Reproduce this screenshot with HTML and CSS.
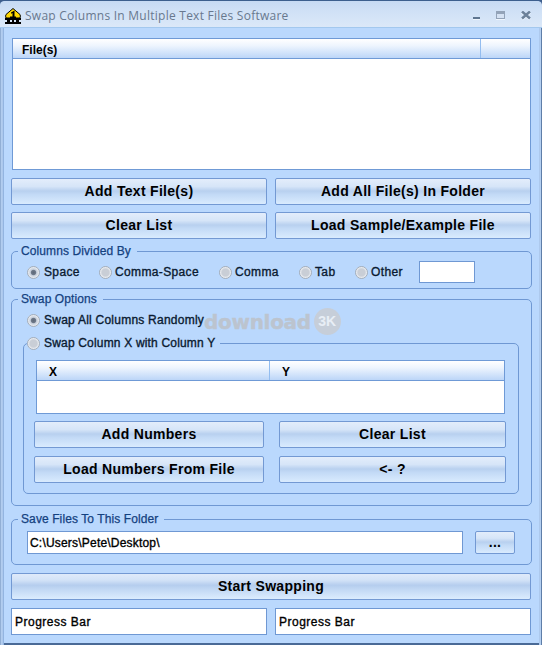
FILE: index.html
```html
<!DOCTYPE html>
<html lang="en">
<head>
<meta charset="utf-8">
<title>Swap Columns In Multiple Text Files Software</title>
<link rel="stylesheet" href="styles.css">
</head>
<body>
<div class="window">
  <header class="titlebar">
    <svg class="app-icon" width="16" height="16" viewBox="0 0 16 16">
      <path d="M8 0.500 L15 6.500 Q15.800 8 15 10 L1 10 Q0.200 8 1 6.500 Z" fill="#ffd800" stroke="#000" stroke-width="1"/>
      <rect x="0" y="10" width="16" height="2" fill="#000"/>
      <rect x="2" y="12" width="3" height="2" fill="#000"/>
      <rect x="7" y="12" width="2" height="2" fill="#000"/>
      <rect x="11" y="12" width="3" height="2" fill="#000"/>
      <rect x="0" y="14" width="16" height="2" fill="#000"/>
      <path d="M6 4.500 L9.500 2.500 L9.500 10 L7.500 10 L7.500 5 L6 5.800 Z" fill="#000"/>
      <rect x="5" y="8.500" width="6" height="1.500" fill="#000"/>
    </svg>
    <span class="title">Swap Columns In Multiple Text Files Software</span>
    <div class="controls">
      <svg width="8" height="10" viewBox="0 0 8 10"><rect x="0" y="6" width="7" height="2" fill="#5f7690"/><rect x="0" y="8" width="7" height="1" fill="#eef5fd"/></svg>
      <svg width="10" height="10" viewBox="0 0 10 10"><rect x="0.500" y="0.500" width="8" height="7" fill="#d5e2f3" stroke="#93a3b8"/><rect x="1" y="1" width="7" height="2" fill="#93a3b8"/><rect x="0" y="8" width="9" height="1" fill="#eef5fd"/></svg>
      <svg width="10" height="10" viewBox="0 0 10 10"><path d="M1 1.500 L9 8.500 M9 1.500 L1 8.500" stroke="#eef5fd" stroke-width="2.500"/><path d="M1 0.500 L9 7.500 M9 0.500 L1 7.500" stroke="#6c8199" stroke-width="2.500"/></svg>
    </div>
  </header>

  <main class="content">
    <div class="list files">
      <div class="list-head"><span class="col col-name">File(s)</span><span class="col col-rest"></span></div>
    </div>

    <div class="btn-grid grid-main">
      <button class="btn">Add Text File(s)</button>
      <button class="btn">Add All File(s) In Folder</button>
      <button class="btn">Clear List</button>
      <button class="btn">Load Sample/Example File</button>
    </div>

    <fieldset class="group group-cols">
      <legend>Columns Divided By</legend>
      <div class="radio-row">
        <label class="radio r-space"><input type="radio" name="sep" checked>Space</label>
        <label class="radio r-cs"><input type="radio" name="sep">Comma-Space</label>
        <label class="radio r-comma"><input type="radio" name="sep">Comma</label>
        <label class="radio r-tab"><input type="radio" name="sep">Tab</label>
        <label class="radio r-other"><input type="radio" name="sep">Other</label>
        <div class="field small"></div>
      </div>
    </fieldset>

    <fieldset class="group group-swap">
      <legend>Swap Options</legend>
      <div class="swap-body">
        <label class="radio r-all"><input type="radio" name="mode" checked>Swap All Columns Randomly</label>
        <fieldset class="group group-inner">
          <legend><label class="radio"><input type="radio" name="mode">Swap Column X with Column Y</label></legend>
          <div class="inner-body">
            <div class="list xy">
              <div class="list-head"><span class="col col-x">X</span><span class="col col-y">Y</span></div>
            </div>
            <div class="btn-grid grid-inner">
              <button class="btn">Add Numbers</button>
              <button class="btn">Clear List</button>
              <button class="btn">Load Numbers From File</button>
              <button class="btn">&lt;- ?</button>
            </div>
          </div>
        </fieldset>
      </div>
    </fieldset>

    <fieldset class="group group-save">
      <legend>Save Files To This Folder</legend>
      <div class="save-row">
        <div class="field path">C:\Users\Pete\Desktop\</div>
        <button class="btn browse">...</button>
      </div>
    </fieldset>

    <button class="btn start">Start Swapping</button>

    <div class="progress-row">
      <div class="field progress">Progress Bar</div>
      <div class="field progress">Progress Bar</div>
    </div>
  </main>

  <div class="watermark" aria-hidden="true">
    <span class="wm-text">download</span>
    <span class="wm-badge">3K</span>
  </div>
</div>
</body>
</html>
```
FILE: styles.css
```css
* { box-sizing: border-box; }
html, body { margin: 0; padding: 0; }
body { width: 542px; height: 645px; overflow: hidden; background: #3f5f8c; font-family: "Liberation Sans", Arial, sans-serif; }

.window {
  position: relative;
  width: 542px;
  height: 645px;
  display: flex;
  flex-direction: column;
  border-top: 1px solid #3c5f8e;
  border-radius: 5px 5px 0 0;
  overflow: hidden;
  background: linear-gradient(90deg, #6f8fba 0, #b5cff0 1px, #a9c6ec 3px, #7ea3d4 4px, #bad8fd 4px, #bad8fd 539px, #a9c6ec 539px, #b8d2f2 541px, #5e7ea8 541px);
}

.titlebar {
  height: 27px;
  flex: none;
  display: flex;
  align-items: center;
  padding: 4px 11px 0 5px;
  background: linear-gradient(#c6daf3 0, #d0e1f6 40%, #dbe8f8 100%);
  border-bottom: 1px solid #a3c8ee;
}
.app-icon { flex: none; margin-right: 4px; }
.title { flex: 1; font: 12px/16px "Open Sans", sans-serif; letter-spacing: 0.25px; color: #68788e; white-space: nowrap; }
.controls { display: flex; align-items: center; gap: 15px; }
.controls svg { display: block; }

.content {
  flex: 1;
  margin: 0 3px 0 4px;
  padding: 10px 8px 8px;
  background: #bad8fd;
  border-bottom: 2px solid #4a6a96;
  display: flex;
  flex-direction: column;
}

.list { background: #fff; border: 1px solid #6f9ad6; }
.files { height: 132px; }
.xy { height: 54px; }
.list-head {
  display: flex;
  height: 20px;
  border-bottom: 1px solid #6f9ad6;
  background: linear-gradient(#fff 0, #eef5fe 35%, #bcd6f8 100%);
  font: bold 12px/22px "Liberation Sans", sans-serif;
  color: #000;
}
.col { display: block; height: 100%; padding-left: 9px; }
.col-name { width: 468px; border-right: 1px solid #93bdf0; }
.col-rest { flex: 1; }
.col-x { width: 233px; padding-left: 12px; border-right: 1px solid #93bdf0; }
.col-y { flex: 1; padding-left: 12px; }

.btn {
  display: block;
  height: 27px;
  margin: 0;
  padding: 0;
  border: 1px solid #7399d3;
  border-radius: 2px;
  background: linear-gradient(#e3edfb 0, #d6e5f8 30%, #b8d0ef 48%, #c3daf6 62%, #d9ebfe 100%);
  font: bold 14px/25px "Liberation Sans", sans-serif;
  color: #000;
  letter-spacing: 0.3px;
}

.btn-grid { display: grid; }
.grid-main { grid-template-columns: 256px 256px; column-gap: 8px; row-gap: 7px; margin: 8px -1px 0; }
.grid-inner { grid-template-columns: 230px 227px; column-gap: 15px; row-gap: 8px; margin: 7px 0 0 -2px; }

.group { margin: 0; padding: 0; min-width: 0; border: 1px solid #6f98d3; border-radius: 5px; }
.group > legend {
  padding: 0 6px 0 3px;
  margin-left: 6px;
  font: 12px/14px "Liberation Sans", sans-serif;
  color: #14417f;
  letter-spacing: 0.1px;
  -webkit-text-stroke: 0.25px #14417f;
}

.group-cols { margin: 5px -1px 0; height: 45px; }
.radio-row { display: flex; align-items: center; height: 24px; margin-top: 2px; padding-left: 15px; }

.radio {
  display: inline-flex;
  align-items: center;
  font: 12px/14px "Liberation Sans", sans-serif;
  letter-spacing: 0.36px;
  -webkit-text-stroke: 0.35px #0a1a30;
  color: #0a1a30;
  white-space: nowrap;
}
.radio input {
  appearance: none;
  -webkit-appearance: none;
  width: 13px;
  height: 13px;
  margin: 0 3px 0 0;
  flex: none;
  border-radius: 50%;
  border: 1px solid #a5aeb9;
  background: radial-gradient(circle at 50% 50%, #c9ced6 0, #c9ced6 45%, #f6f8fb 75%, #f6f8fb 100%);
}
.radio input:checked { background: radial-gradient(circle at 50% 50%, #5e6a7a 0, #6d7888 28%, #c4ccd8 40%, #f6f8fb 78%); }

.r-space { width: 72px; }
.r-space input { margin-right: 4px; }
.r-cs { width: 120px; }
.r-comma { width: 80px; }
.r-tab { width: 56px; }
.r-other { width: 64px; }

.field { background: #fff; border: 1px solid #6f98d3; }
.small { width: 56px; height: 22px; margin-top: -1px; }

.group-swap { margin: 3px -1px 0; height: 214px; }
.swap-body { padding: 0 12px 0 11px; }
.r-all { display: flex; height: 14px; margin: 7px 0 0 4px; letter-spacing: 0.24px; }
.r-all input { margin-right: 4px; }
.group-inner { margin: 8px 0 0 0; height: 159px; }
.group-inner > legend { margin-left: 3px; padding: 0 5px 0 0; height: 16px; }
.group-inner > legend .radio { height: 16px; letter-spacing: 0.18px; }
.group-inner > legend input { margin-right: 4px; }
.inner-body { padding: 9px 13px 0 12px; }

.group-save { margin: 6px -1px 0; height: 53px; }
.save-row { display: flex; gap: 12px; padding: 5px 16px 0 15px; }
.path { flex: 1; height: 23px; font: 12px/22px "Liberation Sans", sans-serif; color: #000; padding-left: 2px; letter-spacing: 0.2px; -webkit-text-stroke: 0.35px #000; }
.browse { width: 40px; height: 23px; line-height: 19px; flex: none; }

.start { margin: 8px -1px 0; flex: none; width: 520px; background: linear-gradient(#dfeafa 0, #d2e2f7 25%, #b5cdee 45%, #c2d8f4 62%, #dbecfe 100%); }

.progress-row { display: flex; gap: 8px; margin: 8px -1px 0; }
.progress { width: 256px; height: 27px; font: 12px/26px "Liberation Sans", sans-serif; color: #000; padding-left: 3px; -webkit-text-stroke: 0.35px #000; letter-spacing: 0.5px; }

.watermark {
  position: absolute;
  left: 204px;
  top: 307px;
  display: flex;
  align-items: center;
  gap: 3px;
  pointer-events: none;
}
.wm-text { font: bold 20px/26px "DejaVu Sans", sans-serif; color: #bcc4cf; letter-spacing: -0.300px; -webkit-text-stroke: 0.4px #bcc4cf; }
.wm-badge {
  width: 27px;
  height: 27px;
  border-radius: 50%;
  background: #c6ced9;
  color: #e8eef6;
  font: bold 14px/27px "Liberation Sans", sans-serif;
  text-align: center;
}
```
